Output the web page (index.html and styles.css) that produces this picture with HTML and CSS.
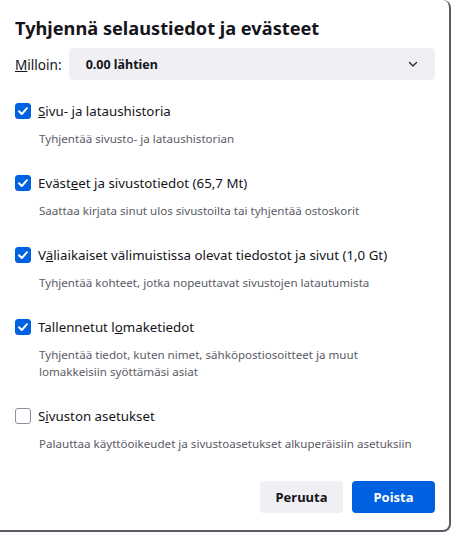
FILE: index.html
```html
<!DOCTYPE html>
<html lang="fi">
<head>
<meta charset="utf-8">
<link rel="stylesheet" href="styles.css">
</head>
<body>
<div class="dialog">
  <h1 class="title">Tyhjennä selaustiedot ja evästeet</h1>
  <div class="when">
    <label class="when-label"><u>M</u>illoin:</label>
    <div class="select">
      <span class="select-value">0.00 lähtien</span>
      <svg class="chevron" width="12" height="12" viewBox="0 0 12 12"><path d="M2.5 4.5 L6 8 L9.5 4.5" fill="none" stroke="#2b2a33" stroke-width="1.4" stroke-linecap="round" stroke-linejoin="round"/></svg>
    </div>
  </div>
  <div class="options">
    <div class="option">
      <div class="opt-row"><span class="cb on"><svg width="16" height="16" viewBox="0 0 16 16"><path d="M4 8.2 L6.8 11 L12 5.2" fill="none" stroke="#fff" stroke-width="2" stroke-linecap="round" stroke-linejoin="round"/></svg></span><span class="opt-label"><u>S</u>ivu- ja lataushistoria</span></div>
      <div class="opt-desc">Tyhjentää sivusto- ja lataushistorian</div>
    </div>
    <div class="option">
      <div class="opt-row"><span class="cb on"><svg width="16" height="16" viewBox="0 0 16 16"><path d="M4 8.2 L6.8 11 L12 5.2" fill="none" stroke="#fff" stroke-width="2" stroke-linecap="round" stroke-linejoin="round"/></svg></span><span class="opt-label">Eväst<u>e</u>et ja sivustotiedot (65,7 Mt)</span></div>
      <div class="opt-desc">Saattaa kirjata sinut ulos sivustoilta tai tyhjentää ostoskorit</div>
    </div>
    <div class="option">
      <div class="opt-row"><span class="cb on"><svg width="16" height="16" viewBox="0 0 16 16"><path d="M4 8.2 L6.8 11 L12 5.2" fill="none" stroke="#fff" stroke-width="2" stroke-linecap="round" stroke-linejoin="round"/></svg></span><span class="opt-label">V<u>ä</u>liaikaiset välimuistissa olevat tiedostot ja sivut (1,0 Gt)</span></div>
      <div class="opt-desc">Tyhjentää kohteet, jotka nopeuttavat sivustojen latautumista</div>
    </div>
    <div class="option">
      <div class="opt-row"><span class="cb on"><svg width="16" height="16" viewBox="0 0 16 16"><path d="M4 8.2 L6.8 11 L12 5.2" fill="none" stroke="#fff" stroke-width="2" stroke-linecap="round" stroke-linejoin="round"/></svg></span><span class="opt-label">Tallennetut l<u>o</u>maketiedot</span></div>
      <div class="opt-desc">Tyhjentää tiedot, kuten nimet, sähköpostiosoitteet ja muut<br>lomakkeisiin syöttämäsi asiat</div>
    </div>
    <div class="option">
      <div class="opt-row"><span class="cb"></span><span class="opt-label">S<u>i</u>vuston asetukset</span></div>
      <div class="opt-desc">Palauttaa käyttöoikeudet ja sivustoasetukset alkuperäisiin asetuksiin</div>
    </div>
  </div>
  <div class="buttons">
    <button class="btn btn-cancel">Peruuta</button>
    <button class="btn btn-primary">Poista</button>
  </div>
</div>
</body>
</html>
```
FILE: styles.css
```css
html, body {
  margin: 0;
  padding: 0;
  background: #ffffff;
}
body {
  font-family: "Noto Sans", "Open Sans", sans-serif;
  color: #15141a;
}
.dialog {
  box-sizing: border-box;
  width: 451px;
  height: 532px;
  border-right: 2px solid #5b5b66;
  border-bottom: 2px solid #5b5b66;
  border-top-right-radius: 8px;
  border-bottom-right-radius: 8px;
  padding: 14px 14px 0 15px;
  display: flex;
  flex-direction: column;
}
.title {
  margin: 0;
  font-size: 18.2px;
  font-weight: 700;
  line-height: 28px;
  color: #15141a;
}
.when {
  display: flex;
  align-items: center;
  margin-top: 6px;
  gap: 7px;
}
.when-label {
  font-size: 13.6px;
  color: #15141a;
}
.when-label u { text-decoration-thickness: 1px; }
.select {
  flex: 1;
  height: 32px;
  background: #f0f0f4;
  border-radius: 4px;
  display: flex;
  align-items: center;
  justify-content: space-between;
  padding: 0 16px 0 17px;
}
.select-value {
  font-size: 12.5px;
  font-weight: 700;
}
.chevron { display: block; }
.options {
  margin-top: 21px;
  display: flex;
  flex-direction: column;
}
.option {
  display: flex;
  flex-direction: column;
  margin-bottom: 26px;
}
.opt-row {
  display: flex;
  align-items: center;
  gap: 7px;
  height: 20px;
}
.cb {
  box-sizing: border-box;
  width: 16px;
  height: 16px;
  border-radius: 3px;
  border: 1px solid #8f8f9d;
  background: #fff;
  display: flex;
  align-items: center;
  justify-content: center;
  flex-shrink: 0;
}
.cb.on {
  background: #0061e0;
  border-color: #0061e0;
}
.cb svg { display: block; flex-shrink: 0; }
.opt-label {
  font-size: 13.3px;
  color: #15141a;
}
.opt-desc {
  margin-top: 9px;
  padding-left: 24px;
  font-size: 11.6px;
  line-height: 17px;
  color: #5b5b66;
  white-space: nowrap;
}
.buttons {
  margin-top: auto;
  margin-bottom: 17px;
  display: flex;
  justify-content: flex-end;
  gap: 9px;
}
.btn {
  width: 83px;
  height: 32px;
  border: none;
  border-radius: 4px;
  font-family: inherit;
  font-size: 13px;
  font-weight: 700;
}
.btn-cancel {
  background: #f0f0f4;
  color: #15141a;
}
.btn-primary {
  background: #0061e0;
  color: #fff;
}
```
